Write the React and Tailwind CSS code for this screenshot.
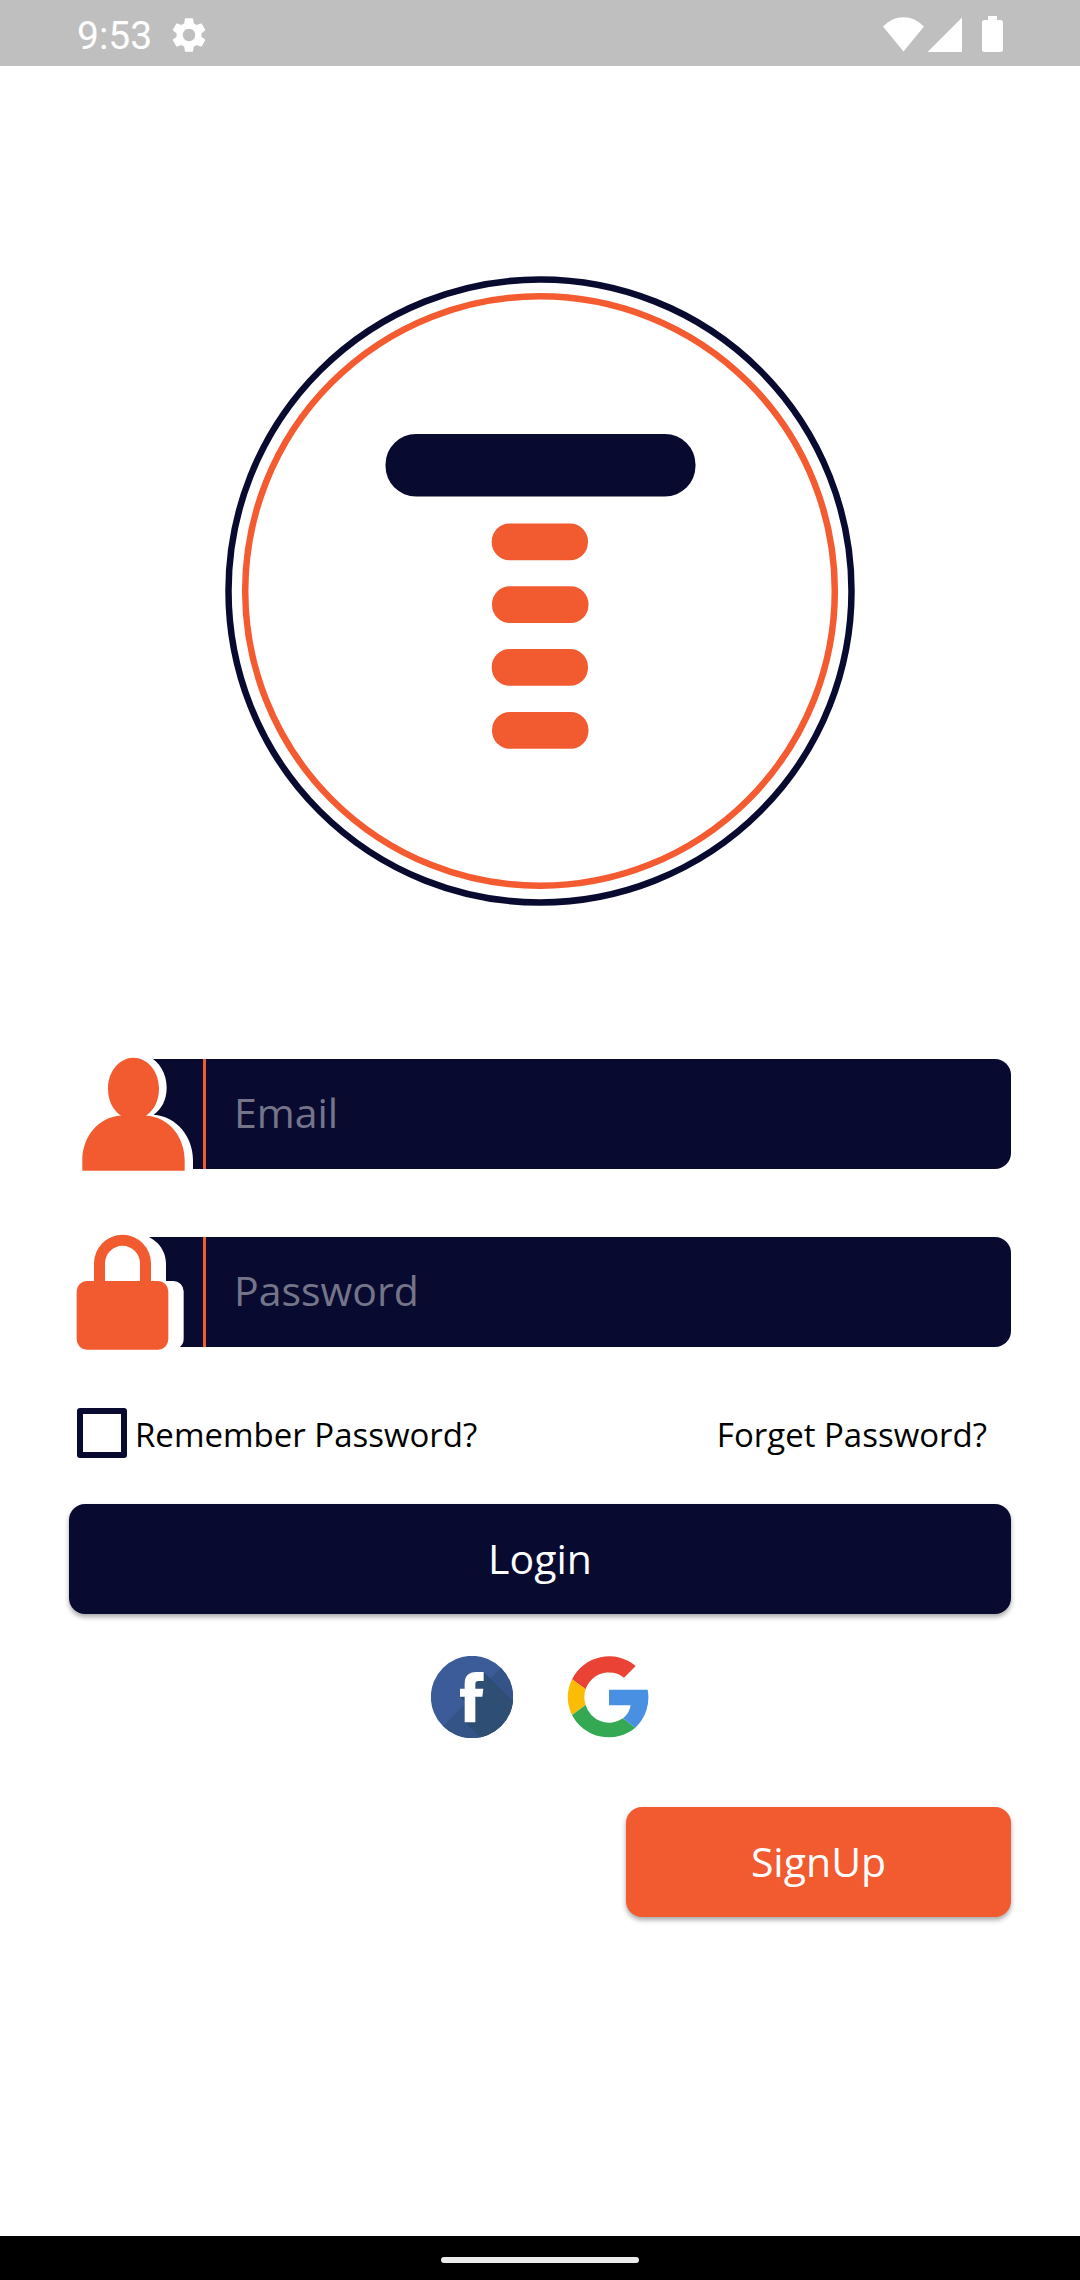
import React from "react";

function StatusBar() {
  return (
    <header className="flex h-[66px] items-center justify-between bg-[#bfbfbf] px-[77px] pt-[2px] text-white">
      <div className="flex items-center gap-[20px] pt-[2px]">
        <span className="pt-[2px] font-['Roboto',sans-serif] text-[39px] leading-[48px]">9:53</span>
        <svg className="h-[36px] w-[34px]" viewBox="2.2 2 19.6 20" fill="currentColor" aria-hidden="true">
          <path d="M19.14 12.94c.04-.3.06-.61.06-.94 0-.32-.02-.64-.07-.94l2.03-1.58a.49.49 0 0 0 .12-.61l-1.92-3.32a.488.488 0 0 0-.59-.22l-2.39.96c-.5-.38-1.03-.7-1.62-.94l-.36-2.54a.484.484 0 0 0-.48-.41h-3.84c-.24 0-.43.17-.47.41l-.36 2.54c-.59.24-1.13.57-1.62.94l-2.39-.96c-.22-.08-.47 0-.59.22L2.74 8.87c-.12.21-.08.47.12.61l2.03 1.58c-.05.3-.09.63-.09.94s.02.64.07.94l-2.03 1.58a.49.49 0 0 0-.12.61l1.92 3.32c.12.22.37.29.59.22l2.39-.96c.5.38 1.03.7 1.62.94l.36 2.54c.05.24.24.41.48.41h3.84c.24 0 .44-.17.47-.41l.36-2.54c.59-.24 1.13-.56 1.62-.94l2.39.96c.22.08.47 0 .59-.22l1.92-3.32c.12-.22.07-.47-.12-.61l-2.01-1.58zM12 15.6A3.61 3.61 0 0 1 8.4 12c0-1.98 1.62-3.6 3.6-3.6s3.6 1.62 3.6 3.6-1.62 3.6-3.6 3.6z" />
        </svg>
      </div>
      <svg className="h-[36px] w-[120px]" viewBox="0 0 120 36" fill="currentColor" aria-hidden="true">
        <path d="M0 10.500C12-2 29-2 41 10.500L20.500 35.500Z" />
        <path d="M79 1.500V36H44.500Z" />
        <path d="M105 0h9v4h3.500a2.500 2.500 0 0 1 2.500 2.500V33.500a2.500 2.500 0 0 1-2.500 2.500h-16a2.500 2.500 0 0 1-2.500-2.500V6.500a2.500 2.500 0 0 1 2.500-2.500h3.500z" />
      </svg>
    </header>
  );
}

function Logo() {
  return (
    <svg className="size-[630px]" viewBox="225 276 630 630" role="img" aria-label="T logo">
      <circle cx="540" cy="591" r="311.500" fill="none" stroke="#080b2f" strokeWidth="6.500" />
      <circle cx="540" cy="591" r="294.800" fill="none" stroke="#f45b30" strokeWidth="6.500" />
      <rect x="385.500" y="434" width="310" height="62.500" rx="30.500" fill="#080b2f" />
      <g fill="#f25a30">
        <rect x="491.700" y="523.500" width="96.300" height="36.800" rx="18" />
        <rect x="492" y="586.200" width="96.500" height="36.800" rx="18" />
        <rect x="491.700" y="649" width="96.300" height="36.800" rx="18" />
        <rect x="492" y="712" width="96.500" height="36.800" rx="18" />
      </g>
    </svg>
  );
}

function PersonIcon() {
  return (
    <svg className="h-[116px] w-[134px] shrink-0" viewBox="57 48 402 348" aria-hidden="true">
      <path
        fill="#fff"
        d="M50 40H275C320 53 350 92 350 143C350 180 334 208 311 224C380 229 429 290 429 360V396H50Z"
      />
      <path
        fill="#f25a30"
        d="M250 53C293 53 327 94 327 146C327 182 312 210 288 227C355 229 404 290 404 360V392H97V360C97 290 146 229 213 227C189 210 174 182 174 146C174 94 208 53 250 53Z"
      />
    </svg>
  );
}

function LockIcon() {
  return (
    <svg className="h-[116px] w-[134px] shrink-0" viewBox="57 42 402 348" aria-hidden="true">
      <path
        fill="#fff"
        d="M50 42H262C310 45 348 84 348 130V183H370A31 31 0 0 1 401 214V356Q401 374 386 383V390H50Z"
      />
      <path
        fill="#f25a30"
        fillRule="evenodd"
        d="M132 183V130A85.500 85.500 0 0 1 303 130V183H324A31 31 0 0 1 355 214V358A31 31 0 0 1 324 389H111A31 31 0 0 1 80 358V214A31 31 0 0 1 111 183ZM165 183H270V130A52.500 52.500 0 0 0 165 130Z"
      />
    </svg>
  );
}

function Field({ icon, label, type }) {
  return (
    <label className="flex h-[110px] items-center rounded-2xl bg-[#080b2f]">
      {icon}
      <input
        type={type}
        placeholder={label}
        aria-label={label}
        className="h-full min-w-0 flex-1 rounded-r-2xl border-l-[3px] border-[#f25a30] bg-transparent pr-6 pb-1 pl-[28px] text-[41px] text-white outline-none placeholder:text-[#75758a]"
      />
    </label>
  );
}

function FacebookIcon() {
  return (
    <svg className="size-[82px]" viewBox="90 77 246 246" aria-hidden="true">
      <defs>
        <clipPath id="fb-disc">
          <circle cx="213" cy="200" r="123.500" />
        </clipPath>
      </defs>
      <g clipPath="url(#fb-disc)">
        <path fill="#3b5c99" d="M90 77H336V323H90Z" />
        <path fill="#345387" d="M340 72V330H84Z" />
        <path fill="#2e4e73" d="M248 125L345 222V330H246L191 275V214L177 199Z" />
      </g>
      <path
        fill="#fff"
        d="M248 125V152H232Q223 152 223 161V175H247L244 199H223V276H191V199H177V175H191V160Q191 125 226 125Z"
      />
    </svg>
  );
}

function GoogleIcon() {
  return (
    <svg className="size-[82px]" viewBox="501 77 246 246" aria-hidden="true">
      <path fill="#ea4335" d="M707 107A124 124 0 0 0 516 147L557 177A73 73 0 0 1 672 142Z" />
      <path fill="#fbbc05" d="M516 147A124 124 0 0 0 516 254L557 224A73 73 0 0 1 557 177Z" />
      <path fill="#34a853" d="M516 254A124 124 0 0 0 706 292L669 264A73 73 0 0 1 557 224Z" />
      <path fill="#4a90e2" d="M706 292A124 124 0 0 0 743 178H627V225H692A62 62 0 0 1 669 264Z" />
    </svg>
  );
}

export default function App() {
  return (
    <div className="flex min-h-screen flex-col bg-white font-['Open_Sans',sans-serif] text-black">
      <StatusBar />
      <main className="flex flex-1 flex-col px-[69px] pt-[210px]">
        <div className="flex justify-center">
          <Logo />
        </div>
        <form className="mt-[153px] flex flex-col" onSubmit={(e) => e.preventDefault()}>
          <div className="flex flex-col gap-[68px]">
            <Field icon={<PersonIcon />} label="Email" type="email" />
            <Field icon={<LockIcon />} label="Password" type="password" />
          </div>
          <div className="mt-[61px] flex items-center justify-between pr-6 pl-2 text-[33px] leading-[44px]">
            <label className="flex items-center gap-2">
              <input
                type="checkbox"
                className="size-[50px] shrink-0 appearance-none rounded-[3px] border-[6px] border-[#080b2f] checked:bg-[#f25a30]"
              />
              <span className="pt-1">Remember Password?</span>
            </label>
            <a href="#forget" className="pt-1">
              Forget Password?
            </a>
          </div>
          <button
            type="submit"
            className="mt-[46px] h-[110px] rounded-2xl bg-[#080b2f] text-[41px] text-white shadow-[0_3px_5px_rgba(0,0,0,0.35)]"
          >
            Login
          </button>
          <div className="mt-[42px] flex justify-center gap-[54px]">
            <button type="button" aria-label="Log in with Facebook">
              <FacebookIcon />
            </button>
            <button type="button" aria-label="Log in with Google">
              <GoogleIcon />
            </button>
          </div>
          <button
            type="button"
            className="mt-[69px] h-[110px] w-[385px] self-end rounded-2xl bg-[#f25a30] text-[41px] text-white shadow-[0_3px_5px_rgba(0,0,0,0.35)]"
          >
            SignUp
          </button>
        </form>
      </main>
      <footer className="flex h-[44px] items-center justify-center bg-black pt-1">
        <div className="h-[6px] w-[198px] rounded-full bg-[#ebebeb]" />
      </footer>
    </div>
  );
}
